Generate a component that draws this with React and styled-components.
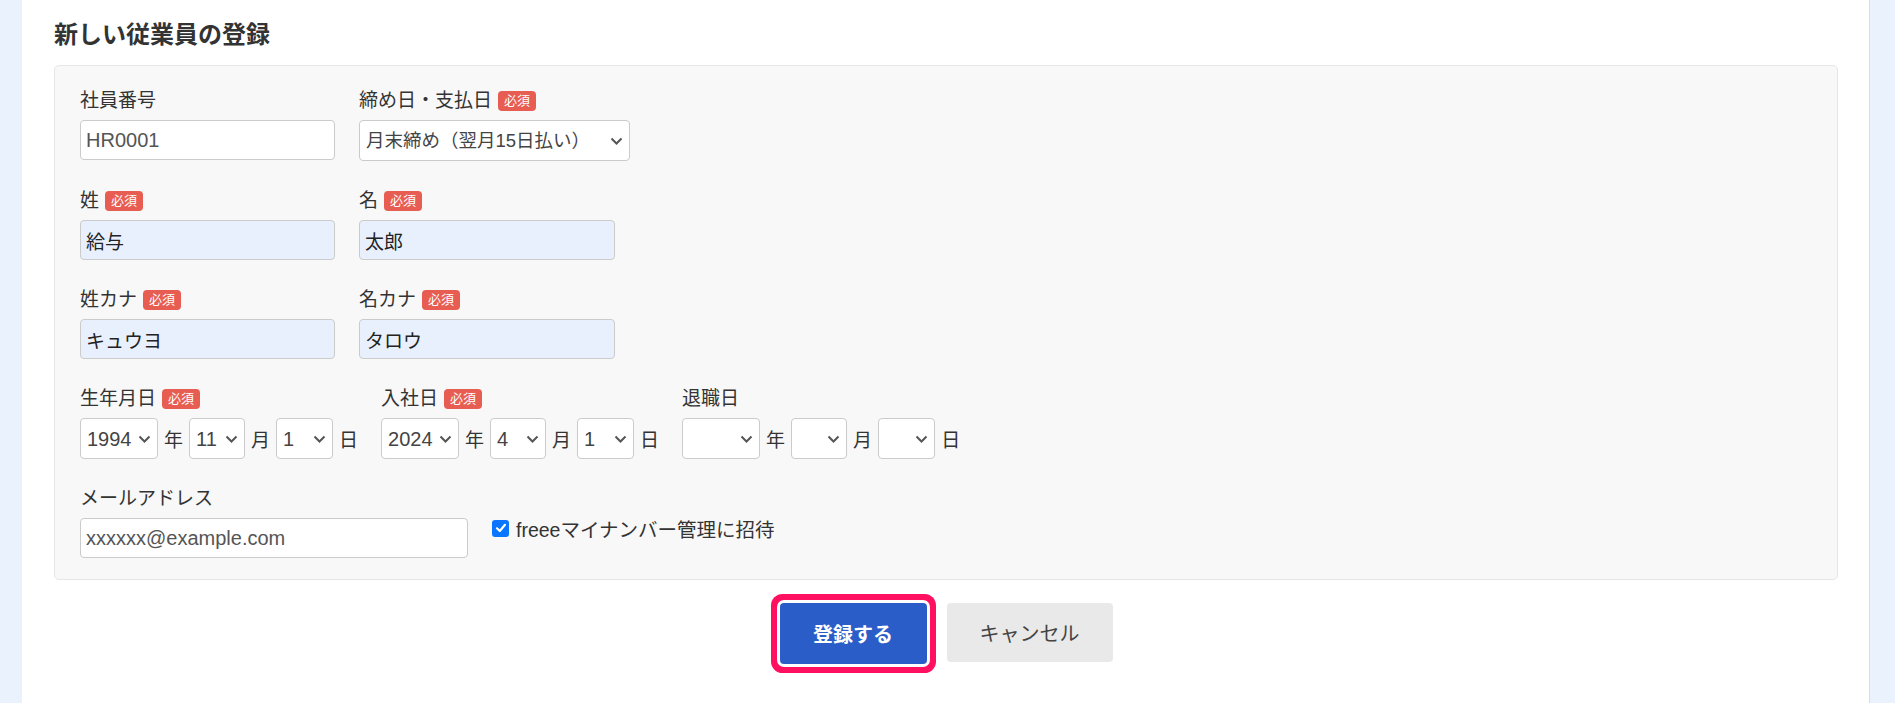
import React from "react";
import styled, { createGlobalStyle } from "styled-components";

const GlobalStyle = createGlobalStyle`
  body {
    margin: 0;
    background: #ffffff;
    font-family: "Liberation Sans", "Noto Sans CJK JP", sans-serif;
    color: #333;
  }
`;

const Shell = styled.div`
  display: flex;
  height: 703px;
  overflow: hidden;
`;

const SideStrip = styled.div`
  flex: 0 0 ${(p) => p.$w}px;
  background: #eaf2fd;
  border-left: ${(p) => (p.$edge ? "1px solid #dcdcdc" : "none")};
`;

const Main = styled.main`
  flex: 1;
  padding: 19px 31px 0 32px;
`;

const Title = styled.h2`
  margin: 0 0 14px;
  font-size: 24px;
  line-height: 32px;
  font-weight: 700;
  color: #333;
`;

const Panel = styled.section`
  display: flex;
  flex-direction: column;
  gap: 28px;
  padding: 23px 26px 21px 25px;
  background: #f8f8f8;
  border: 1px solid #e6e6e6;
  border-radius: 5px;
`;

const Row = styled.div`
  display: flex;
  align-items: flex-start;
  gap: ${(p) => p.$gap || 24}px;
`;

const Field = styled.div`
  display: flex;
  flex-direction: column;
  gap: 7px;
`;

const Label = styled.label`
  display: flex;
  align-items: center;
  gap: 6px;
  height: 24px;
  font-size: 19px;
  line-height: 24px;
  color: #333;
`;

const Badge = styled.span`
  display: inline-flex;
  align-items: center;
  height: 20px;
  padding: 0 6px;
  border-radius: 4px;
  background: #e85d52;
  color: #fff;
  font-size: 13px;
  line-height: 20px;
`;

const TextInput = styled.input`
  box-sizing: border-box;
  width: ${(p) => p.$w}px;
  height: 40px;
  padding: 0 5px;
  border: 1px solid #cbcbcb;
  border-radius: 4px;
  background: ${(p) => (p.$filled ? "#e8f0fe" : "#ffffff")};
  color: ${(p) => (p.$filled ? "#222" : "#555")};
  font-family: inherit;
  font-size: ${(p) => p.$fs || 20}px;
  outline: none;
`;

const SelectWrap = styled.div`
  position: relative;
  width: ${(p) => p.$w}px;
  height: 41px;
`;

const Select = styled.select`
  appearance: none;
  box-sizing: border-box;
  width: 100%;
  height: 100%;
  padding: 0 22px 0 6px;
  border: 1px solid #cbcbcb;
  border-radius: 4px;
  background: #fff;
  color: #444;
  font-family: inherit;
  font-size: ${(p) => p.$fs || 20}px;
  outline: none;
`;

const Chevron = styled.svg`
  position: absolute;
  right: 7px;
  top: 50%;
  width: 13px;
  height: 8px;
  margin-top: -4px;
  pointer-events: none;
`;

const DateGroup = styled.div`
  display: flex;
  align-items: center;
  gap: 6px;
`;

const Unit = styled.span`
  font-size: 19px;
  color: #333;
`;

const CheckLabel = styled.label`
  display: flex;
  align-items: center;
  gap: 7px;
  height: 20px;
  font-size: 19.5px;
  color: #333;
`;

const CheckBox = styled.span`
  display: inline-flex;
  align-items: center;
  justify-content: center;
  width: 17px;
  height: 17px;
  border-radius: 3px;
  background: #0a75ff;
`;

const Actions = styled.div`
  display: flex;
  justify-content: center;
  gap: 20px;
  margin-top: 23px;
`;

const Button = styled.button`
  height: ${(p) => (p.$primary ? 61 : 59)}px;
  width: ${(p) => (p.$primary ? 147 : 166)}px;
  border: none;
  border-radius: 4px;
  font-family: inherit;
  font-size: 20px;
  font-weight: ${(p) => (p.$primary ? 700 : 400)};
  background: ${(p) => (p.$primary ? "#2b5dc9" : "#e9e9e9")};
  color: ${(p) => (p.$primary ? "#fff" : "#444")};
  box-shadow: ${(p) =>
    p.$primary ? "0 0 0 3px #ffffff, 0 0 0 9px #ff1060" : "none"};
`;

function Dropdown({ w, fs, value, options }) {
  return (
    <SelectWrap $w={w}>
      <Select $fs={fs} defaultValue={value}>
        {options.map((o) => (
          <option key={o} value={o}>
            {o}
          </option>
        ))}
      </Select>
      <Chevron viewBox="0 0 13 8">
        <path d="M1.5 1.5 L6.5 6.5 L11.5 1.5" fill="none" stroke="#555" strokeWidth="2" />
      </Chevron>
    </SelectWrap>
  );
}

function DateSelect({ y, m, d }) {
  return (
    <DateGroup>
      <Dropdown w={78} value={y} options={[y]} />
      <Unit>年</Unit>
      <Dropdown w={56} value={m} options={[m]} />
      <Unit>月</Unit>
      <Dropdown w={57} value={d} options={[d]} />
      <Unit>日</Unit>
    </DateGroup>
  );
}

export default function App() {
  return (
    <>
      <GlobalStyle />
      <Shell>
        <SideStrip $w={22} />
        <Main>
          <Title>新しい従業員の登録</Title>
          <Panel>
            <Row>
              <Field>
                <Label>社員番号</Label>
                <TextInput $w={255} defaultValue="HR0001" />
              </Field>
              <Field>
                <Label>
                  締め日・支払日<Badge>必須</Badge>
                </Label>
                <Dropdown
                  w={271}
                  fs={18.5}
                  value="月末締め（翌月15日払い）"
                  options={["月末締め（翌月15日払い）"]}
                />
              </Field>
            </Row>
            <Row>
              <Field>
                <Label>
                  姓<Badge>必須</Badge>
                </Label>
                <TextInput $w={255} $fs={19} $filled defaultValue="給与" />
              </Field>
              <Field>
                <Label>
                  名<Badge>必須</Badge>
                </Label>
                <TextInput $w={256} $fs={19} $filled defaultValue="太郎" />
              </Field>
            </Row>
            <Row>
              <Field>
                <Label>
                  姓カナ<Badge>必須</Badge>
                </Label>
                <TextInput $w={255} $fs={19} $filled defaultValue="キュウヨ" />
              </Field>
              <Field>
                <Label>
                  名カナ<Badge>必須</Badge>
                </Label>
                <TextInput $w={256} $fs={19} $filled defaultValue="タロウ" />
              </Field>
            </Row>
            <Row $gap={23}>
              <Field>
                <Label>
                  生年月日<Badge>必須</Badge>
                </Label>
                <DateSelect y="1994" m="11" d="1" />
              </Field>
              <Field>
                <Label>
                  入社日<Badge>必須</Badge>
                </Label>
                <DateSelect y="2024" m="4" d="1" />
              </Field>
              <Field>
                <Label>退職日</Label>
                <DateSelect y="" m="" d="" />
              </Field>
            </Row>
            <Row>
              <Field>
                <Label>メールアドレス</Label>
                <Row>
                  <TextInput $w={388} defaultValue="xxxxxx@example.com" />
                  <CheckLabel>
                    <CheckBox>
                      <svg width="12" height="12" viewBox="0 0 12 12">
                        <path d="M2 6.3 L4.8 9 L10 2.8" fill="none" stroke="#fff" strokeWidth="2.2" strokeLinecap="round" strokeLinejoin="round" />
                      </svg>
                    </CheckBox>
                    freeeマイナンバー管理に招待
                  </CheckLabel>
                </Row>
              </Field>
            </Row>
          </Panel>
          <Actions>
            <Button $primary>登録する</Button>
            <Button>キャンセル</Button>
          </Actions>
        </Main>
        <SideStrip $w={25} $edge />
      </Shell>
    </>
  );
}
